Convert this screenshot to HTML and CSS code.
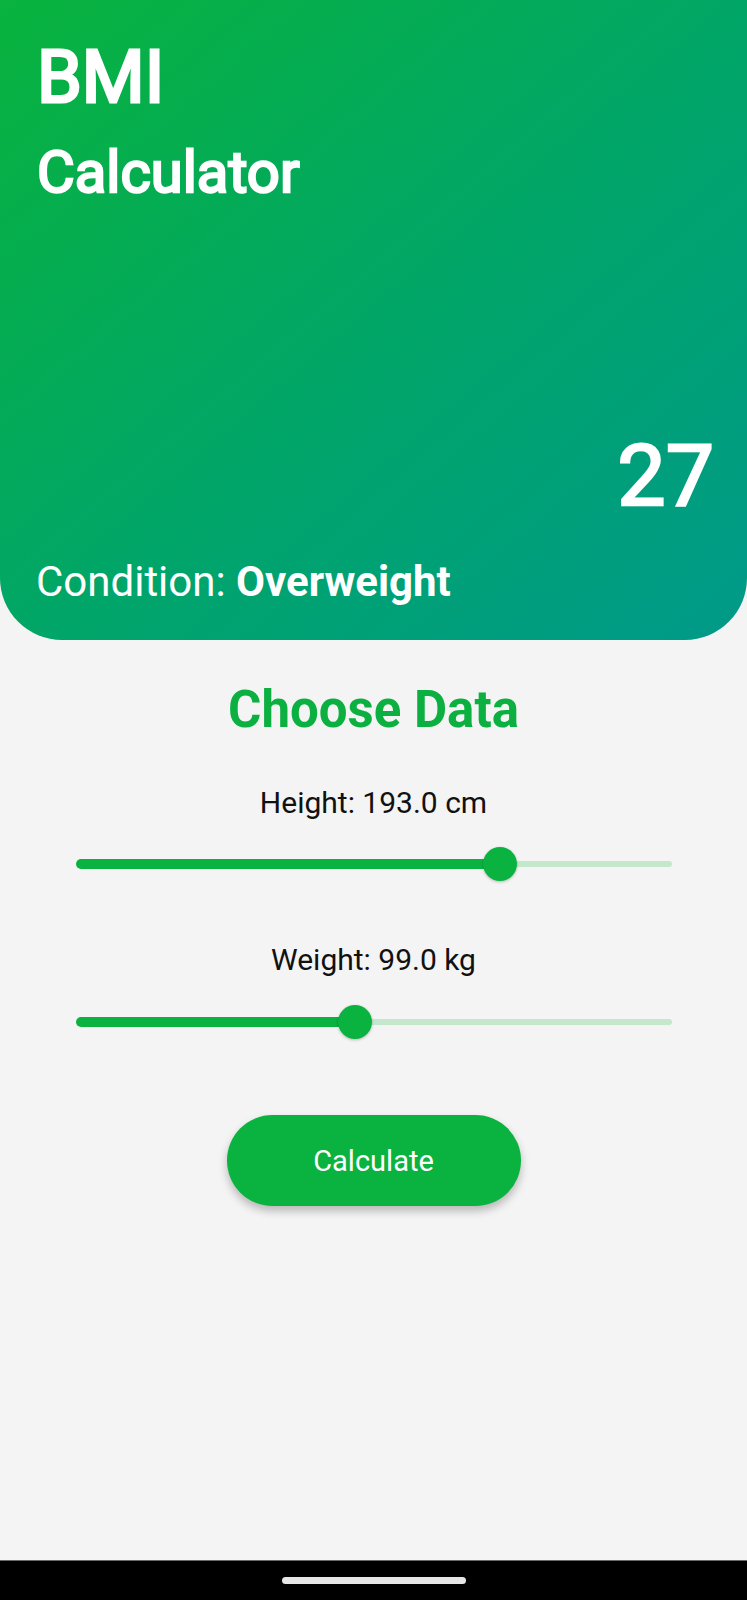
FILE: index.html
```html
<!DOCTYPE html>
<html lang="en">
<head>
<meta charset="utf-8">
<title>BMI Calculator</title>
<link rel="stylesheet" href="styles.css">
</head>
<body>
<div class="screen">
  <header class="hero">
    <div class="title">
      <div class="title-main">BMI</div>
      <div class="title-sub">Calculator</div>
    </div>
    <div class="score">27</div>
    <div class="condition">Condition: <strong>Overweight</strong></div>
  </header>

  <main class="content">
    <h2 class="section-title">Choose Data</h2>

    <div class="field">
      <div class="field-label">Height: 193.0 cm</div>
      <div class="slider">
        <div class="track">
          <div class="track-active" style="width:71.1%"></div>
          <div class="track-inactive"></div>
        </div>
        <div class="thumb" style="left:71.1%"></div>
      </div>
    </div>

    <div class="field field-second">
      <div class="field-label">Weight: 99.0 kg</div>
      <div class="slider">
        <div class="track">
          <div class="track-active" style="width:46.8%"></div>
          <div class="track-inactive"></div>
        </div>
        <div class="thumb" style="left:46.8%"></div>
      </div>
    </div>

    <button class="calc-btn" type="button">Calculate</button>
  </main>

  <nav class="sysbar"><span class="handle"></span></nav>
</div>
</body>
</html>
```

FILE: styles.css
```css
* { box-sizing: border-box; }

html, body {
  margin: 0;
  padding: 0;
  background: #f4f4f4;
}

body {
  font-family: Roboto, "Noto Sans", "Liberation Sans", sans-serif;
  color: #111;
}

.screen {
  width: 747px;
  min-height: 1600px;
  display: flex;
  flex-direction: column;
  background: #f4f4f4;
}

/* ---------- header ---------- */
.hero {
  height: 640px;
  padding: 42px 33px 37px 37px;
  display: flex;
  flex-direction: column;
  color: #fff;
  background: linear-gradient(to bottom right, #09b33d 0%, #00a56a 55%, #009a8a 100%);
  border-radius: 0 0 62px 62px;
}

.title-main {
  font-size: 72px;
  line-height: 72px;
  font-weight: 400;
  -webkit-text-stroke: 3px #fff;
}

.title-sub {
  margin-top: 29px;
  font-size: 58px;
  line-height: 58px;
  font-weight: 400;
  -webkit-text-stroke: 2.4px #fff;
}

.score {
  margin-top: auto;
  align-self: flex-end;
  font-size: 86px;
  line-height: 86px;
  font-weight: 400;
  -webkit-text-stroke: 2.4px #fff;
}

.condition {
  margin-top: 42px;
  margin-left: -1px;
  font-size: 42px;
  line-height: 42px;
  font-weight: 400;
}

.condition strong {
  font-weight: 700;
}

/* ---------- content ---------- */
.content {
  flex: 1;
  display: flex;
  flex-direction: column;
  align-items: center;
}

.section-title {
  margin: 44px 0 0;
  font-size: 51px;
  line-height: 51px;
  font-weight: 700;
  color: #0bb040;
}

.field {
  width: 100%;
  margin-top: 53px;
  display: flex;
  flex-direction: column;
  align-items: center;
}

.field-second {
  margin-top: 61px;
}

.field-label {
  font-size: 30px;
  line-height: 30px;
  color: #111;
}

.slider {
  position: relative;
  align-self: stretch;
  height: 40px;
  margin: 26px 75px 0 76px;
  display: flex;
  align-items: center;
}

.field-second .slider {
  margin-top: 27px;
}

.track {
  width: 100%;
  display: flex;
  align-items: center;
}

.track-active {
  height: 10px;
  background: #0ab33f;
  border-radius: 5px 0 0 5px;
}

.track-inactive {
  flex: 1;
  height: 6px;
  background: #c3e8cc;
  border-radius: 0 3px 3px 0;
}

.thumb {
  position: absolute;
  top: 50%;
  width: 34px;
  height: 34px;
  border-radius: 50%;
  background: #0ab33f;
  transform: translate(-50%, -50%);
  box-shadow: 0 1px 3px rgba(0, 0, 0, 0.25);
}

.calc-btn {
  margin-top: 73px;
  width: 294px;
  height: 91px;
  border: none;
  border-radius: 46px;
  background: #0ab33f;
  color: #fff;
  font-family: Roboto, "Noto Sans", "Liberation Sans", sans-serif;
  font-size: 29px;
  font-weight: 400;
  box-shadow: 0 5px 9px rgba(0, 0, 0, 0.25);
}

/* ---------- system nav bar ---------- */
.sysbar {
  height: 40px;
  background: #000;
  border-top: 1px solid #6a6a6a;
  display: flex;
  justify-content: center;
  align-items: center;
}

.handle {
  width: 184px;
  height: 7px;
  border-radius: 4px;
  background: #e6e6e6;
}
```
